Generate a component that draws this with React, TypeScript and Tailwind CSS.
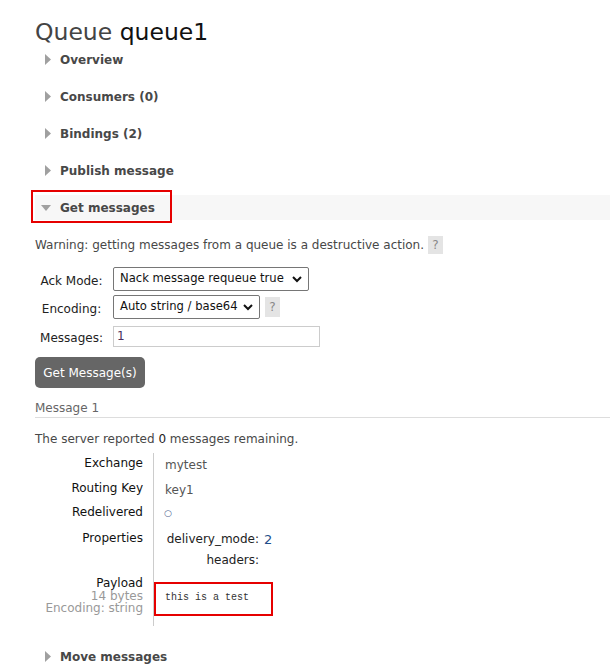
import React from "react";

const font = { fontFamily: '"DejaVu Sans", Verdana, sans-serif' };

function RightTri() {
  return (
    <svg width="6" height="11" viewBox="0 0 6 11" className="shrink-0">
      <path d="M0 0 L6 5.5 L0 11 Z" fill="#a0a0a0" />
    </svg>
  );
}

function DownTri() {
  return (
    <svg width="10" height="6" viewBox="0 0 10 6" className="shrink-0">
      <path d="M0 0 L10 0 L5 6 Z" fill="#a0a0a0" />
    </svg>
  );
}

function Section({ title }: { title: string }) {
  return (
    <div className="h-[25px] flex items-center pl-[10px] gap-[9px]">
      <RightTri />
      <span className="font-bold text-[12px] text-[#484848]">{title}</span>
    </div>
  );
}

function Chevron() {
  return (
    <svg width="10" height="7" viewBox="0 0 10 7" className="shrink-0">
      <path d="M1 1 L5 5 L9 1" stroke="#111" strokeWidth="2" fill="none" />
    </svg>
  );
}

function Help() {
  return (
    <span className="inline-flex w-[15px] h-[18px] items-center justify-center bg-[#e4e4e4] text-[#888] text-[12px]">
      ?
    </span>
  );
}

export default function App() {
  return (
    <div className="min-h-[670px] bg-white pl-[35px] pt-[18px] text-[#484848]" style={font}>
      <h1 className="text-[23.5px] leading-[28px] text-[#444]">
        Queue <span className="text-[#111]">queue1</span>
      </h1>
      <div className="flex flex-col gap-[12px] mt-px">
        <Section title="Overview" />
        <Section title="Consumers (0)" />
        <Section title="Bindings (2)" />
        <Section title="Publish message" />
        <div className="relative h-[25px] flex items-center pl-[6px] gap-[9px] bg-[#f7f7f7]">
          <DownTri />
          <span className="font-bold text-[12px] text-[#484848]">Get messages</span>
          <div className="absolute left-[-4px] top-[-5px] w-[141px] h-[33px] border-2 border-[#e60000]" />
        </div>
      </div>

      <div className="mt-[16px] flex items-center gap-[4px] text-[12px] leading-[18px]">
        <span>Warning: getting messages from a queue is a destructive action.</span>
        <Help />
      </div>

      <div className="mt-[13px] grid grid-cols-[73px_auto] gap-x-[5px] gap-y-[4px] items-center text-[12px] text-[#222]">
        <span className="text-center pt-[4px]">Ack Mode:</span>
        <div className="flex">
          <div className="h-[24px] w-[196px] border border-[#767676] rounded-[2px] flex items-center justify-between pl-[6px] pr-[6px] text-[#111] text-[11.6px]">
            <span>Nack message requeue true</span>
            <Chevron />
          </div>
        </div>
        <span className="text-center pt-[4px]">Encoding:</span>
        <div className="flex items-center gap-[5px]">
          <div className="h-[24px] w-[147px] border border-[#767676] rounded-[2px] flex items-center justify-between pl-[6px] pr-[6px] text-[#111] text-[11.6px]">
            <span>Auto string / base64</span>
            <Chevron />
          </div>
          <span className="inline-flex w-[15px] h-[20px] items-center justify-center bg-[#e4e4e4] text-[#888] text-[12px]">?</span>
        </div>
        <span className="text-center pt-[4px] mt-[2px]">Messages:</span>
        <div className="flex mt-[2px]">
          <div className="h-[21px] w-[207px] border border-[#cccccc] flex items-center pl-[3px] text-[#4a2f5e]">
            1
          </div>
        </div>
      </div>

      <button className="mt-[10px] h-[31px] w-[110px] rounded-[5px] bg-[#666] text-white text-[12px] flex items-center justify-center">
        Get Message(s)
      </button>

      <div className="mt-[12px] border-b border-[#dddddd] text-[12px] leading-[16px] pb-[1px] text-[#666]">
        Message 1
      </div>

      <div className="mt-[12px] text-[12px] leading-[18px]">
        The server reported <span className="text-[#222]">0</span> messages remaining.
      </div>

      <div className="mt-[5px] grid grid-cols-[118px_auto] w-fit text-[12px]">
        <div className="text-right pr-[10px] text-[#111] pt-[1px] leading-[18px] h-[25px]">Exchange</div>
        <div className="border-l border-[#cccccc] pl-[11px] pt-[3px] leading-[18px] text-[#555]">mytest</div>

        <div className="text-right pr-[10px] text-[#111] leading-[18px] h-[24px] pt-[1px]">Routing Key</div>
        <div className="border-l border-[#cccccc] pl-[11px] pt-[3px] leading-[18px] text-[#555]">key1</div>

        <div className="text-right pr-[10px] text-[#111] leading-[18px] h-[26px] pt-[1px]">Redelivered</div>
        <div className="border-l border-[#cccccc] pl-[10px] h-[26px]">
          <div className="h-[22px] flex items-center text-[9px] leading-[18px] text-[#4f6790]">○</div>
        </div>

        <div className="text-right pr-[10px] text-[#111] leading-[18px] pt-[1px]">Properties</div>
        <div className="border-l border-[#cccccc] pl-[10px] pt-[1px] pb-[4px]">
          <div className="grid grid-cols-[95px_auto] gap-x-[5px] leading-[20px] text-[#222]">
            <span className="text-right">delivery_mode:</span>
            <span className="text-[#1e4e8a] text-[13px] pt-[1px]">2</span>
            <span className="text-right">headers:</span>
            <span />
          </div>
        </div>

        <div className="text-right pr-[10px] leading-[12.5px] pt-[3px]">
          <div className="text-[#111]">Payload</div>
          <div className="text-[#999]">14 bytes</div>
          <div className="text-[#999]">Encoding: string</div>
        </div>
        <div className="border-l border-[#cccccc] pl-[11px] h-[52px] relative">
          <pre className="text-[10px] leading-[14px] text-[#333] pt-[17px] m-0" style={{ fontFamily: '"Liberation Mono", "Courier New", monospace' }}>
            this is a test
          </pre>
          <div className="absolute left-0 top-[8px] w-[119px] h-[34px] border-2 border-[#e60000]" />
        </div>
      </div>

      <div className="mt-[18px] pb-[10px]">
        <Section title="Move messages" />
      </div>
    </div>
  );
}
